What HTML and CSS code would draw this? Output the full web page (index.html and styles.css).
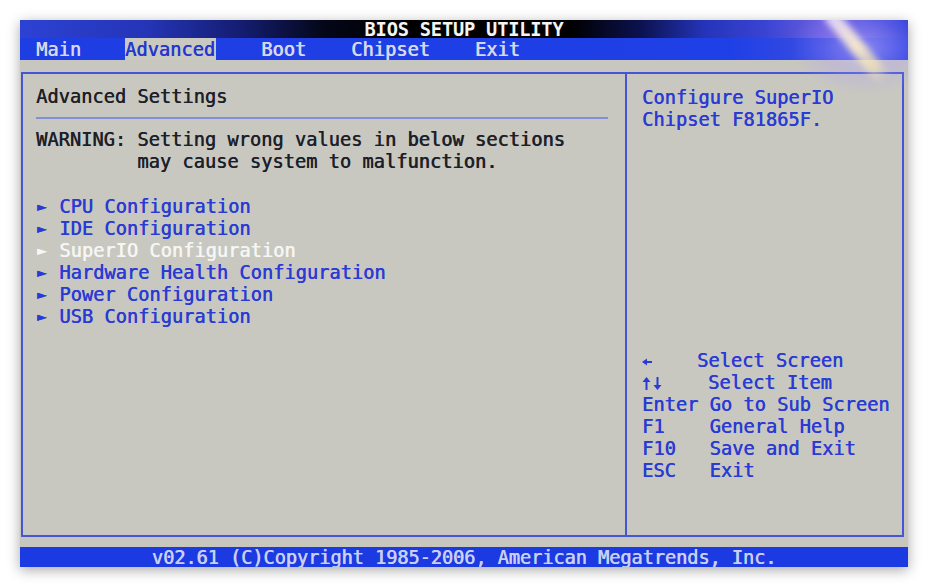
FILE: index.html
```html
<!DOCTYPE html>
<html>
<head>
<meta charset="utf-8">
<link rel="stylesheet" href="styles.css">
</head>
<body>
<div class="screen">
  <div class="titlebar">BIOS SETUP UTILITY</div>
  <nav class="menubar">
    <span class="tab">Main</span>
    <span class="tab active">Advanced</span>
    <span class="tab">Boot</span>
    <span class="tab">Chipset</span>
    <span class="tab">Exit</span>
  </nav>
  <div class="body">
    <div class="panel">
      <section class="main">
        <div class="heading">Advanced Settings</div>
        <div class="rule"></div>
        <div class="warning">WARNING: Setting wrong values in below sections
         may cause system to malfunction.</div>
        <ul class="items">
          <li><span class="arrow">►</span> CPU Configuration</li>
          <li><span class="arrow">►</span> IDE Configuration</li>
          <li class="selected"><span class="arrow">►</span> SuperIO Configuration</li>
          <li><span class="arrow">►</span> Hardware Health Configuration</li>
          <li><span class="arrow">►</span> Power Configuration</li>
          <li><span class="arrow">►</span> USB Configuration</li>
        </ul>
      </section>
      <aside class="side">
        <div class="desc">Configure SuperIO
Chipset F81865F.</div>
        <div class="keys"><span class="key one"><svg width="10" height="8" viewBox="0 0 10 8"><polygon points="0,4 5,0.5 5,7.5" fill="currentColor"/><line x1="4" y1="4" x2="10" y2="4" stroke="currentColor" stroke-width="2"/></svg></span>    Select Screen
<span class="key two"><svg width="9" height="13" viewBox="0 0 9 13"><polygon points="4.5,0 0.5,5 8.5,5" fill="currentColor"/><line x1="4.5" y1="4" x2="4.5" y2="13" stroke="currentColor" stroke-width="2"/></svg><svg width="9" height="13" viewBox="0 0 9 13"><polygon points="4.5,13 0.5,8 8.5,8" fill="currentColor"/><line x1="4.5" y1="0" x2="4.5" y2="9" stroke="currentColor" stroke-width="2"/></svg></span>    Select Item
Enter Go to Sub Screen
F1    General Help
F10   Save and Exit
ESC   Exit</div>
      </aside>
    </div>
  </div>
  <footer class="footer">v02.61 (C)Copyright 1985-2006, American Megatrends, Inc.</footer>
  <div class="glow"></div>
  <div class="glare"></div>
</div>
</body>
</html>
```

FILE: styles.css
```css
html, body {
  margin: 0;
  padding: 0;
  background: #ffffff;
}

body {
  width: 928px;
  height: 588px;
  overflow: hidden;
}

.screen {
  position: relative;
  margin: 20px;
  width: 888px;
  height: 547px;
  display: flex;
  flex-direction: column;
  background: #c7c7bf;
  box-shadow: 0 3px 12px rgba(0, 0, 0, 0.35);
  font-family: "DejaVu Sans Mono", "Liberation Mono", monospace;
  font-size: 18.7px;
  text-shadow: 0.6px 0 0 currentColor;
  overflow: hidden;
}

.titlebar {
  height: 18px;
  line-height: 19px;
  text-align: center;
  color: #f4f4f4;
  font-weight: bold;
  text-shadow: none;
  background: linear-gradient(90deg, #2c42d4 0%, #2535b8 14%, #141d70 25%, #05071a 34%, #000 42%, #000 62%, #0c1250 70%, #2434b8 77%, #3a44d4 84%, #7060e0 91%, #4a50dc 96%, #2c3ed8 100%);
  letter-spacing: -0.2px;
}

.menubar {
  height: 22px;
  display: flex;
  gap: 45px;
  padding-left: 16px;
  background: linear-gradient(90deg, #1e3ee4 0%, #1f40e6 80%, #3e4ee0 92%, #2a40e0 100%);
  color: #d6d8ea;
  line-height: 24px;
}

.tab.active {
  background: #c9c9c2;
  color: #2436d0;
  padding: 0 1px 0 0;
  margin-left: -1px;
}

.body {
  flex: 1;
  padding: 12px 4px 10px 1px;
  display: flex;
}

.panel {
  flex: 1;
  border: 2px solid #4456d6;
  display: grid;
  grid-template-columns: 602px 275px;
  column-gap: 2px;
  background: #4456d6;
}

.main {
  background: #c8c8c0;
  padding: 12px 0 0 13px;
}

.heading {
  line-height: 22px;
  color: #1d1f2a;
}

.rule {
  margin: 9px 17px 10px 0;
  height: 2px;
  background: #8290d6;
}

.warning {
  white-space: pre;
  line-height: 22px;
  color: #1d1f2a;
}

.items {
  list-style: none;
  margin: 23px 0 0 0;
  padding: 0;
  line-height: 22px;
  color: #2a3ad4;
}

.items li {
  white-space: pre;
  height: 22px;
}

.arrow {
  display: inline-block;
  width: 11px;
  font-size: 16px;
  line-height: 22px;
  vertical-align: top;
  margin-left: 1px;
}

.items li.selected {
  color: #f6f6f4;
}

.side {
  background: #c8c8c0;
  padding: 13px 0 53px 15px;
  display: flex;
  flex-direction: column;
  justify-content: space-between;
  color: #2a3ad4;
  line-height: 22px;
}

.desc, .keys {
  white-space: pre;
}

.key {
  display: inline-flex;
  align-items: center;
  height: 22px;
  vertical-align: top;
}

.key svg {
  display: block;
}

.key.one {
  width: 10px;
  padding-top: 1px;
  height: 21px;
}

.key.two {
  width: 21px;
  gap: 2px;
}

.footer {
  height: 20px;
  line-height: 21px;
  background: #1c3ae2;
  color: #c9cff0;
  text-align: center;
  letter-spacing: -0.1px;
}

.glow {
  position: absolute;
  left: 770px;
  top: -20px;
  width: 150px;
  height: 95px;
  background: radial-gradient(ellipse at center, rgba(200, 180, 255, 0.55) 0%, rgba(170, 150, 255, 0.25) 40%, rgba(160, 140, 255, 0) 70%);
  pointer-events: none;
}

.glare {
  position: absolute;
  left: 802px;
  top: -6px;
  width: 15px;
  height: 86px;
  transform-origin: top center;
  transform: rotate(-40deg);
  background: linear-gradient(180deg, rgba(235, 225, 255, 0.85) 0%, rgba(255, 240, 200, 0.9) 50%, rgba(255, 240, 170, 0.6) 80%, rgba(255, 240, 170, 0) 100%);
  filter: blur(3px);
  pointer-events: none;
}
```
